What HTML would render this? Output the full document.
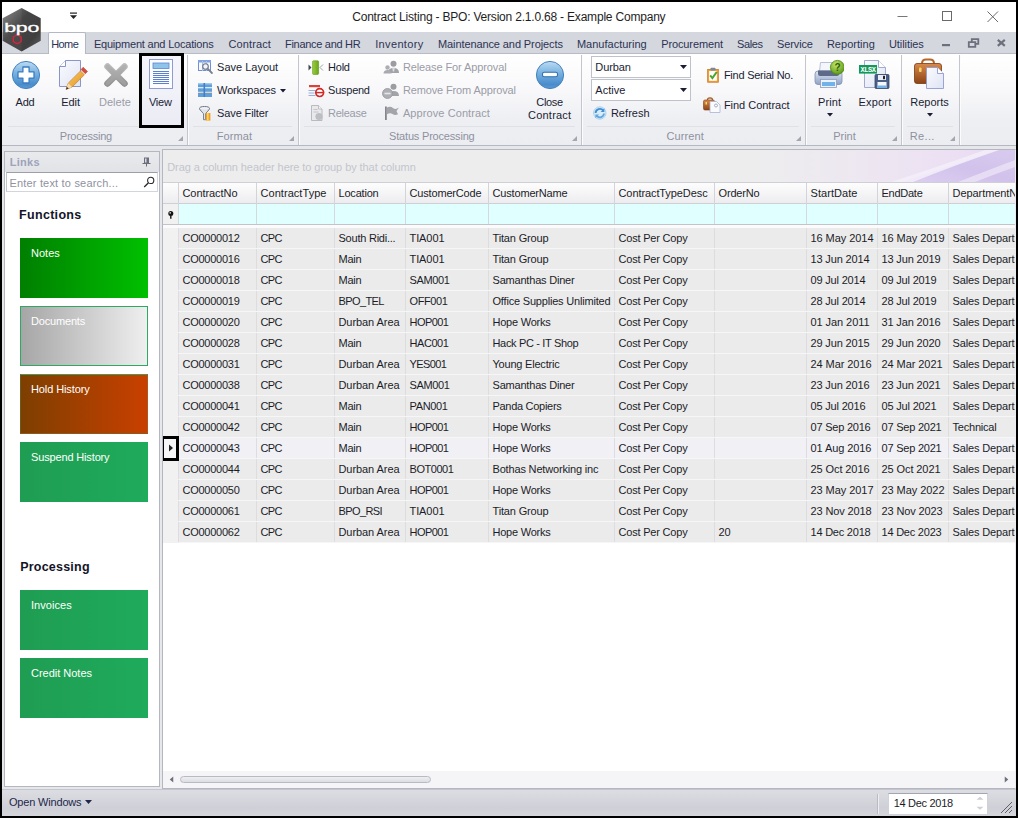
<!DOCTYPE html>
<html lang="en"><head><meta charset="utf-8"><title>Contract Listing - BPO</title>
<style>
*{box-sizing:border-box;margin:0;padding:0}
html,body{width:1018px;height:818px;overflow:hidden;background:#000}
body{font-family:"Liberation Sans",sans-serif;font-size:11px;color:#1a1a2e;letter-spacing:-0.15px;position:relative}
.abs{position:absolute}
.t{position:absolute;white-space:nowrap;color:#1a1d33}
#win{position:absolute;left:2px;top:2px;width:1014px;height:814px;background:#e6e7eb;overflow:hidden}
#title{position:absolute;left:0;top:0;width:1014px;height:30px;background:#fff}
#tabs{position:absolute;left:0;top:30px;width:1014px;height:22px;background:#d5d7de;border-bottom:1px solid #b9bcc6}
.tab{color:#2b3353}
#hometab{position:absolute;left:46px;top:30px;width:38px;height:23px;background:#fdfdfe;border:1px solid #b4b8c4;border-bottom:none;border-radius:2px 2px 0 0}
#ribbon{position:absolute;left:0;top:52px;width:1014px;height:92px;background:linear-gradient(#ffffff 0%,#f8f8fa 40%,#eeeff3 72%,#ecedf1 100%);border-bottom:1px solid #b5b8c0}
.gsep{position:absolute;top:3px;width:2px;height:90px;border-left:1px solid #c3c6cf;border-right:1px solid #fcfcfd}
.gcap{color:#8d919f}
.gline{position:absolute;top:70px;height:1px;background:#dfe1e6}
.dis{color:#9a9ca6}
.launch{position:absolute;top:81px;width:0;height:0;border-left:5px solid transparent;border-bottom:5px solid #a3a6b0}

#lp{position:absolute;left:2px;top:149px;width:156px;height:636px;background:#fff;border:1px solid #b4b7c0}
#lph{position:absolute;left:0;top:0;width:154px;height:20px;background:linear-gradient(#e9eaec,#e2e3e7)}
#lph span{position:absolute;left:5px;top:3px;font-weight:bold;color:#a9adbd;font-size:11px;letter-spacing:0}
#srch{position:absolute;left:1px;top:20px;width:152px;height:20px;border:1px solid #d3d5dc;border-top-color:#9c9faa;border-left-color:#c3c5cd;background:#fff}
#srch span{position:absolute;left:3px;top:2px;color:#9da0ab;font-size:11px;letter-spacing:0.1px}
.hd{position:absolute;left:15.500px;font-weight:bold;font-size:13px;color:#141428;letter-spacing:-0.2px}
.tile{position:absolute;left:16px;width:128px;height:60px;color:#fff;font-size:11px}
.tile span{position:absolute;left:11px;top:9px;letter-spacing:-0.1px}
#gp{position:absolute;left:160px;top:147px;width:854px;height:640px;background:#fff;border:1px solid #b4b7c0;border-right-color:#ececf0;overflow:hidden}
#grp{position:absolute;left:0;top:0;width:852px;height:33px;background:#ededee;border-bottom:1px solid #cfd0d6}
#grp span{position:absolute;left:5px;top:9px;color:#c3c5cc;font-size:11px;letter-spacing:-0.05px}
#hdr{position:absolute;left:0;top:33px;width:852px;height:21px;background:linear-gradient(#fdfdfd,#ededf0);border-bottom:1px solid #cfd0d6}
#flt{position:absolute;left:0;top:54px;width:852px;height:21px;background:#e0ffff;border-bottom:1px solid #c3c4ca}
.hc{position:absolute;top:0;height:21px;border-left:1px solid #d3d4da;padding:4px 0 0 3.5px;white-space:nowrap;overflow:hidden;color:#1c1c28}
.fc{position:absolute;top:0;height:20px;border-left:1px solid #d3d9de}
.row{position:absolute;left:0;width:852px;height:21px;background:#ebebeb;border-bottom:1px solid #f6f6f7}
.row.foc{background:#f0f0f5}
.c{position:absolute;top:0;height:20px;border-left:1px solid #dddde0;padding:4px 0 0 3.5px;white-space:nowrap;overflow:hidden;color:#1c1c28}
.ind{position:absolute;left:0;top:0;width:16px;height:21px;background:#f1f1f2}
#status{position:absolute;left:0;top:787px;width:1014px;height:27px;background:linear-gradient(#dddee3,#cfd0d7 70%,#d5d6db);box-shadow:inset 0 1px 0 #c6c7ce}
</style></head>
<body>
<div id="win">
<div id="title"><div class="t " style="left:350.2px;top:8.4px;font-size:12px;line-height:14px;letter-spacing:-0.20px;color:#1e1e1e;">Contract Listing - BPO: Version 2.1.0.68 - Example Company</div>
<svg class="abs" style="left:67px;top:10px" width="9" height="8" viewBox="0 0 9 8"><rect x="1" y="0.5" width="7" height="1.2" fill="#222"/><path d="M1 3.2h7L4.5 7z" fill="#222"/></svg>
<svg class="abs" style="left:880px;top:0" width="134" height="30" viewBox="0 0 134 30"><path d="M15.500 14.500h10" stroke="#777" stroke-width="1"/><rect x="60.500" y="9.500" width="9" height="9" fill="none" stroke="#6a6a6a" stroke-width="1"/><path d="M105.5 9.5l10.5 10.5M116 9.5l-10.5 10.5" stroke="#6a6a6a" stroke-width="1" fill="none"/></svg>
</div>
<div id="tabs"></div><div id="hometab"></div>
<div class="t tab" style="left:49.2px;top:36.2px;font-size:11px;line-height:13px;letter-spacing:-0.59px;">Home</div><div class="t tab" style="left:91.9px;top:36.2px;font-size:11px;line-height:13px;letter-spacing:-0.20px;">Equipment and Locations</div><div class="t tab" style="left:226.5px;top:36.2px;font-size:11px;line-height:13px;letter-spacing:0.12px;">Contract</div><div class="t tab" style="left:283.0px;top:36.2px;font-size:11px;line-height:13px;letter-spacing:-0.29px;">Finance and HR</div><div class="t tab" style="left:373.2px;top:36.2px;font-size:11px;line-height:13px;letter-spacing:0.35px;">Inventory</div><div class="t tab" style="left:436.0px;top:36.2px;font-size:11px;line-height:13px;letter-spacing:-0.10px;">Maintenance and Projects</div><div class="t tab" style="left:574.9px;top:36.2px;font-size:11px;line-height:13px;letter-spacing:0.01px;">Manufacturing</div><div class="t tab" style="left:659.2px;top:36.2px;font-size:11px;line-height:13px;letter-spacing:-0.11px;">Procurement</div><div class="t tab" style="left:735.0px;top:36.2px;font-size:11px;line-height:13px;letter-spacing:-0.37px;">Sales</div><div class="t tab" style="left:775.1px;top:36.2px;font-size:11px;line-height:13px;letter-spacing:-0.14px;">Service</div><div class="t tab" style="left:824.9px;top:36.2px;font-size:11px;line-height:13px;letter-spacing:0.03px;">Reporting</div><div class="t tab" style="left:887.0px;top:36.2px;font-size:11px;line-height:13px;letter-spacing:-0.08px;">Utilities</div>
<svg class="abs" style="left:920px;top:32px" width="94" height="20" viewBox="0 0 94 20"><rect x="20" y="10" width="8" height="2.200" fill="#6d707c"/><path d="M49.800 5.200h6.500v4.600h-6.500z" fill="none" stroke="#6d707c" stroke-width="1.800"/><path d="M46.800 8.200h6.500v4.600h-6.500z" fill="#d5d7de" stroke="#6d707c" stroke-width="1.800"/><path d="M75.800 5.800l7 6M82.800 5.800l-7 6" stroke="#6d707c" stroke-width="2.200" fill="none"/></svg>
<div id="ribbon"></div>
<svg width="0" height="0" style="position:absolute"><defs>
<linearGradient id="gBlue" x1="0" y1="0" x2="0" y2="1"><stop offset="0" stop-color="#bcdcf3"/><stop offset="0.5" stop-color="#6eabdd"/><stop offset="0.85" stop-color="#4a8ccb"/><stop offset="1" stop-color="#5b9ad4"/></linearGradient>
<linearGradient id="gBlueL" x1="0" y1="0" x2="0" y2="1"><stop offset="0" stop-color="#9ccbee"/><stop offset="1" stop-color="#3f83c4"/></linearGradient>
<linearGradient id="gGrayX" x1="0" y1="0" x2="0" y2="1"><stop offset="0" stop-color="#bdbdbd"/><stop offset="1" stop-color="#8f8f8f"/></linearGradient>
<linearGradient id="gPage" x1="0" y1="0" x2="1" y2="1"><stop offset="0" stop-color="#fafbff"/><stop offset="1" stop-color="#dfe4f3"/></linearGradient>
<linearGradient id="gGreen" x1="0" y1="0" x2="1" y2="0"><stop offset="0" stop-color="#9ccf3c"/><stop offset="1" stop-color="#6aa51c"/></linearGradient>
<radialGradient id="gGreenB" cx="40%" cy="30%" r="70%"><stop offset="0" stop-color="#c3e86a"/><stop offset="1" stop-color="#5e9a18"/></radialGradient>
<linearGradient id="gBrown" x1="0" y1="0" x2="0" y2="1"><stop offset="0" stop-color="#d98a4a"/><stop offset="1" stop-color="#8c4315"/></linearGradient>
<linearGradient id="gPrn" x1="0" y1="0" x2="0" y2="1"><stop offset="0" stop-color="#dfe6f2"/><stop offset="1" stop-color="#8fa3c6"/></linearGradient>
<linearGradient id="gPencil" x1="0" y1="0" x2="1" y2="1"><stop offset="0" stop-color="#fbd36a"/><stop offset="1" stop-color="#e08a1a"/></linearGradient>
</defs></svg>
<div class="gsep" style="left:185px;top:53px"></div><div class="gsep" style="left:296px;top:53px"></div><div class="gsep" style="left:579px;top:53px"></div><div class="gsep" style="left:803px;top:53px"></div><div class="gsep" style="left:899px;top:53px"></div><div class="gsep" style="left:957px;top:53px"></div>
<div class="gline" style="left:6px;width:173px;top:124px"></div><div class="t gcap" style="left:57.8px;top:127.7px;font-size:11px;line-height:13px;letter-spacing:-0.23px;">Processing</div><div class="launch" style="left:176px;top:134px"></div><div class="gline" style="left:191px;width:99px;top:124px"></div><div class="t gcap" style="left:214.8px;top:127.7px;font-size:11px;line-height:13px;letter-spacing:0.09px;">Format</div><div class="launch" style="left:287px;top:134px"></div><div class="gline" style="left:302px;width:271px;top:124px"></div><div class="t gcap" style="left:387.1px;top:127.7px;font-size:11px;line-height:13px;letter-spacing:-0.19px;">Status Processing</div><div class="launch" style="left:570px;top:134px"></div><div class="gline" style="left:585px;width:212px;top:124px"></div><div class="t gcap" style="left:664.5px;top:127.7px;font-size:11px;line-height:13px;letter-spacing:0.10px;">Current</div><div class="launch" style="left:794px;top:134px"></div><div class="gline" style="left:809px;width:84px;top:124px"></div><div class="t gcap" style="left:831.2px;top:127.7px;font-size:11px;line-height:13px;letter-spacing:-0.01px;">Print</div><div class="launch" style="left:890px;top:134px"></div><div class="gline" style="left:905px;width:46px;top:124px"></div><div class="t gcap" style="left:907.8px;top:127.7px;font-size:11px;line-height:13px;letter-spacing:0.35px;">Re...</div><div class="launch" style="left:948px;top:134px"></div>
<div class="abs" style="left:137px;top:51px;width:45px;height:75px;border:3px solid #000;background:rgba(232,232,246,0.45)"></div>
<svg class="abs" style="left:9px;top:58px" width="30" height="30" viewBox="0 0 30 30"><circle cx="15" cy="15" r="13.6" fill="url(#gBlue)" stroke="#4682bf" stroke-width="1"/><path d="M11.900 7h6.200v4.900h4.900v6.200h-4.900v4.900h-6.200v-4.900H7v-6.200h4.900z" fill="#fdfeff" stroke="#3a7cc0" stroke-width="1.300" stroke-linejoin="round"/></svg>
<svg class="abs" style="left:55px;top:56px" width="32" height="34" viewBox="0 0 32 34"><path d="M8.5 2.5h15v26h-21v-20z" fill="url(#gPage)" stroke="#8a95c9" stroke-width="1"/><path d="M2.5 8.5h6v-6" fill="#fff" stroke="#8a95c9" stroke-width="1"/><path d="M9 31.500l2.200-6.300L23.500 12.900l3.900 3.900L15.100 29.100z" fill="url(#gPencil)" stroke="#b8741c" stroke-width="0.600"/><path d="M24 11.500l2.200-2.300 4.300 4.300-2.200 2.300z" fill="#d84a3a" stroke="#b03426" stroke-width="0.5"/><path d="M9 31.500l0.900-2.800 1.900 1.900z" fill="#333"/><path d="M11.200 25.200l-1.300 3.500 1.900 1.900 3.300-1.500z" fill="#f3dcb4"/></svg>
<svg class="abs" style="left:99px;top:58px" width="30" height="30" viewBox="0 0 30 30"><path d="M6.500 6.500l17 17M23.500 6.500l-17 17" stroke="url(#gGrayX)" stroke-width="6.500" stroke-linecap="round" fill="none"/><path d="M6.500 6.500l17 17M23.500 6.500l-17 17" stroke="#a9a9a9" stroke-width="4" stroke-linecap="round" fill="none" opacity="0.600"/></svg>
<svg class="abs" style="left:146px;top:56px" width="26" height="32" viewBox="0 0 26 32"><rect x="1.500" y="1.500" width="23" height="29" fill="#fbfcff" stroke="#8f9bd2" stroke-width="1"/><rect x="5" y="5" width="16" height="5.500" fill="#8ec3ea" stroke="#5f86cf" stroke-width="0.800"/><rect x="5" y="13" width="16" height="1" fill="#5c7fd0"/><rect x="5" y="15" width="16" height="1" fill="#5c7fd0"/><rect x="5" y="17" width="16" height="1" fill="#5c7fd0"/><rect x="5" y="19" width="16" height="1" fill="#5c7fd0"/><rect x="5" y="21" width="16" height="1" fill="#5c7fd0"/><rect x="5" y="23" width="16" height="1" fill="#5c7fd0"/><rect x="5" y="25" width="16" height="1" fill="#5c7fd0"/></svg>
<svg class="abs" style="left:533px;top:58px" width="30" height="30" viewBox="0 0 30 30"><circle cx="15" cy="15" r="13.600" fill="url(#gBlue)" stroke="#4682bf" stroke-width="1"/><rect x="7.500" y="12.200" width="15" height="4.600" rx="1.800" fill="#fff" stroke="#2f6fb0" stroke-width="1.100"/></svg>
<svg class="abs" style="left:812px;top:56px" width="30" height="32" viewBox="0 0 30 32"><path d="M6.500 4.500h14l1 9h-16z" fill="#f4f6fb" stroke="#a9b3cc" stroke-width="0.800"/><rect x="1" y="13" width="27" height="13.500" rx="3" fill="url(#gPrn)" stroke="#7d8fb3" stroke-width="0.800"/><path d="M4 12.500h21v3.500q0 2-2 2h-17q-2 0-2-2z" fill="#5d6b88"/><rect x="6.500" y="21.500" width="16" height="8" fill="#eef2fa" stroke="#8d9cbd" stroke-width="0.800"/><rect x="8" y="24" width="13" height="4" fill="#6fb3e8"/><circle cx="23.400" cy="9.400" r="7" fill="url(#gGreenB)" stroke="#4f8414" stroke-width="0.800"/><text x="23.400" y="13" font-size="10" font-weight="bold" font-family="Liberation Sans,sans-serif" text-anchor="middle" fill="#2f5a0b">?</text></svg>
<svg class="abs" style="left:856px;top:56px" width="32" height="32" viewBox="0 0 32 32"><path d="M6.500 2.500h14l7 7v20h-21z" fill="url(#gPage)" stroke="#98a3c8" stroke-width="0.900"/><path d="M20.500 2.500v7h7" fill="#fff" stroke="#98a3c8" stroke-width="0.900"/><rect x="1" y="7" width="18" height="8.600" fill="#12995a"/><text x="10" y="14.300" font-size="7" font-weight="bold" font-family="Liberation Mono,monospace" text-anchor="middle" fill="#fff" letter-spacing="-0.400">XLSX</text><rect x="17" y="16.500" width="14" height="14" rx="1" fill="#4a5f88" stroke="#34466b" stroke-width="0.800"/><rect x="20" y="17" width="8" height="5" fill="#e8edf6"/><rect x="25" y="17.800" width="2" height="3.400" fill="#222"/><rect x="19.500" y="24" width="9" height="6" fill="#f5f7fb"/><rect x="19.500" y="27.500" width="9" height="2.500" fill="#6fb3e8"/></svg>
<svg class="abs" style="left:911px;top:55px" width="32" height="33" viewBox="0 0 32 33"><path d="M9 6.500q0-4 4-4h4q4 0 4 4" fill="none" stroke="#b4662a" stroke-width="2"/><rect x="1.500" y="6.500" width="27" height="20" rx="2.500" fill="url(#gBrown)" stroke="#7a3a10" stroke-width="0.800"/><rect x="6" y="10.500" width="2.600" height="4.500" rx="1" fill="#f6d56a"/><path d="M13.500 10.500h11l6 6v15h-17z" fill="url(#gPage)" stroke="#8f9bd2" stroke-width="0.900"/><path d="M24.500 10.500v6h6" fill="#fff" stroke="#8f9bd2" stroke-width="0.900"/></svg>
<svg class="abs" style="left:196px;top:58px" width="15" height="15" viewBox="0 0 15 15"><rect x="0.500" y="0.500" width="12" height="10" fill="#f7f9fe" stroke="#6f8fd6" stroke-width="1"/><rect x="0" y="0" width="13" height="2.500" fill="#7fa3e0"/><path d="M4.500 1v10M8.500 1v10" stroke="#a9bfea" stroke-width="1"/><circle cx="7.500" cy="6.500" r="2.800" fill="#f2f5fb" stroke="#6d7482" stroke-width="1.100"/><path d="M9.600 8.700l4.300 4.300" stroke="#7a8190" stroke-width="1.800" stroke-linecap="round"/></svg>
<svg class="abs" style="left:196px;top:81px" width="14" height="14" viewBox="0 0 14 14"><rect x="0" y="0" width="14" height="14" fill="#5f9fdb"/><rect x="0" y="0" width="14" height="1.500" fill="#9fcaee"/><path d="M0 4.700h14" stroke="#e8f3fc" stroke-width="1.200"/><path d="M0 9.300h14" stroke="#f6d9b0" stroke-width="1.200"/><path d="M6.300 0v14" stroke="#3f80c6" stroke-width="1.600"/></svg>
<svg class="abs" style="left:197px;top:104px" width="13" height="15" viewBox="0 0 13 15"><ellipse cx="5.500" cy="2.600" rx="5" ry="2.100" fill="#eef0f4" stroke="#6f7684" stroke-width="1"/><path d="M0.800 3.500l3.700 4.200v6h2v-6l3.700-4.200" fill="#dfe3ea" stroke="#6f7684" stroke-width="0.900"/><rect x="6.600" y="7" width="4.800" height="7.600" fill="#f0a020"/><rect x="8" y="7" width="1.600" height="7.600" fill="#fbd27a"/></svg>
<svg class="abs" style="left:306px;top:58px" width="16" height="16" viewBox="0 0 16 16"><path d="M0.500 4.500l3 3-3 3z" fill="#3f4652"/><rect x="4.600" y="0.800" width="6" height="13.600" rx="0.800" fill="url(#gGreen)" stroke="#5c9318" stroke-width="0.600"/><path d="M15 4.500l-3 3 3 3" fill="none" stroke="#9aa0aa" stroke-width="1"/></svg>
<svg class="abs" style="left:306px;top:81px" width="19" height="16" viewBox="0 0 19 16"><rect x="1" y="2" width="11" height="2.200" fill="#d8433a"/><path d="M0.500 7.500h7M0.500 10h6M0.500 12.500h7" stroke="#9ab0dc" stroke-width="1"/><circle cx="11.700" cy="9.600" r="3.900" fill="#fff" stroke="#d22a24" stroke-width="1.700"/><path d="M7.700 9.600h8" stroke="#d22a24" stroke-width="1.500"/></svg>
<svg class="abs" style="left:308px;top:103px" width="16" height="17" viewBox="0 0 16 17"><path d="M1.500 0.500h7l3.500 3.500v11.500h-10.500z" fill="#e9e9ec" stroke="#b3b4ba" stroke-width="0.900"/><path d="M8.500 0.500v3.500h3.500" fill="#f6f6f8" stroke="#b3b4ba" stroke-width="0.800"/><circle cx="9" cy="11.500" r="3.600" fill="#bdbec4"/><path d="M3.500 4.500h4M3.500 7h5" stroke="#c4c5cb" stroke-width="1"/></svg>
<svg class="abs" style="left:381px;top:58px" width="17" height="15" viewBox="0 0 17 15"><circle cx="10.500" cy="3.800" r="3" fill="#9c9da3"/><path d="M5 13q0-5 5.500-5t5.500 5z" fill="#a2a3a9"/><circle cx="4.500" cy="7.500" r="2.200" fill="#adaeb4"/><path d="M0.500 13.500q0-3.500 4-3.500t4 3.500z" fill="#a9aab0"/><path d="M9.200 7.500h2.600l-0.600 4h-1.400z" fill="#dcdce0"/></svg>
<svg class="abs" style="left:380px;top:81px" width="18" height="17" viewBox="0 0 18 17"><circle cx="11.500" cy="3.800" r="3" fill="#9c9da3"/><path d="M6 13q0-5 5.500-5t5.500 5z" fill="#a2a3a9"/><circle cx="5.500" cy="10.500" r="5" fill="#aeafb5" stroke="#96979d" stroke-width="0.800"/><path d="M2.500 10.500h6" stroke="#e6e6ea" stroke-width="1.600"/></svg>
<svg class="abs" style="left:382px;top:104px" width="16" height="15" viewBox="0 0 16 15"><rect x="1" y="0.500" width="1.800" height="13.500" fill="#85868c"/><path d="M3 1.500q3.500-1.500 6 0.500t6-0.500l-2.500 3.500 1.500 3.200q-3 1.500-5.500-0.200t-5.500 0.200z" fill="#a3a4aa"/></svg>
<svg class="abs" style="left:590px;top:104px" width="16" height="14" viewBox="0 0 16 14"><circle cx="7.800" cy="7" r="6.200" fill="#d8ebf9" stroke="#9cc9ea" stroke-width="0.800"/><path d="M3.600 7a4.200 4.200 0 0 1 7.600-2.400" fill="none" stroke="#3f8fd2" stroke-width="1.800"/><path d="M12.400 2.200v3.800h-3.800z" fill="#3f8fd2"/><path d="M12 7.500a4.200 4.200 0 0 1-7.300 2.400" fill="none" stroke="#5fa6de" stroke-width="1.800"/><path d="M3.400 12.200v-3.600h3.600z" fill="#5fa6de"/></svg>
<svg class="abs" style="left:705px;top:65px" width="12" height="16" viewBox="0 0 12 16"><rect x="0.700" y="2.500" width="10.600" height="12.700" fill="#f6a13a" stroke="#c97518" stroke-width="0.800"/><rect x="2.100" y="4" width="7.800" height="9.800" fill="#fdfdfd"/><rect x="3.500" y="0.800" width="5" height="2.800" rx="0.800" fill="#7f8796"/><path d="M3.200 8.300l2.200 2.800 4.400-6.200" fill="none" stroke="#4aa52e" stroke-width="1.900"/></svg>
<svg class="abs" style="left:701px;top:95px" width="18" height="16" viewBox="0 0 18 16"><path d="M4.500 3q0-2 2-2h1q2 0 2 2" fill="none" stroke="#b4662a" stroke-width="1.300"/><rect x="0.500" y="3" width="11" height="10" rx="1.500" fill="url(#gBrown)" stroke="#7a3a10" stroke-width="0.600"/><rect x="2.500" y="5" width="1.500" height="2.500" fill="#f6d56a"/><path d="M7 4.500h6.500l3.500 3.500v7.500h-10z" fill="#fafbff" stroke="#aab3d6" stroke-width="0.800"/><circle cx="13" cy="8.500" r="1.500" fill="none" stroke="#8a93a8" stroke-width="0.700"/></svg>
<div class="t " style="left:13.5px;top:93.9px;font-size:11px;line-height:13px;letter-spacing:-0.19px;">Add</div><div class="t " style="left:59.2px;top:93.9px;font-size:11px;line-height:13px;letter-spacing:-0.02px;">Edit</div><div class="t dis" style="left:97.1px;top:93.9px;font-size:11px;line-height:13px;letter-spacing:-0.02px;">Delete</div><div class="t " style="left:146.9px;top:93.9px;font-size:11px;line-height:13px;letter-spacing:-0.19px;">View</div><div class="t " style="left:534.3px;top:93.7px;font-size:11px;line-height:13px;letter-spacing:-0.34px;">Close</div><div class="t " style="left:526.1px;top:107.2px;font-size:11px;line-height:13px;letter-spacing:0.20px;">Contract</div><div class="t " style="left:816.0px;top:93.9px;font-size:11px;line-height:13px;letter-spacing:0.10px;">Print</div><div class="t " style="left:856.5px;top:93.9px;font-size:11px;line-height:13px;letter-spacing:0.18px;">Export</div><div class="t " style="left:908.3px;top:93.9px;font-size:11px;line-height:13px;letter-spacing:-0.02px;">Reports</div><svg class="abs" style="left:824.5px;top:110.5px" width="6" height="4" viewBox="0 0 6 4"><path d="M0 0h6L3.0 3.5z" fill="#1a1d33"/></svg>
<svg class="abs" style="left:924.5px;top:110.5px" width="6" height="4" viewBox="0 0 6 4"><path d="M0 0h6L3.0 3.5z" fill="#1a1d33"/></svg>
<div class="t " style="left:215.1px;top:59.4px;font-size:11px;line-height:13px;letter-spacing:-0.01px;">Save Layout</div><div class="t " style="left:215.1px;top:82.3px;font-size:11px;line-height:13px;letter-spacing:-0.15px;">Workspaces</div><div class="t " style="left:215.1px;top:104.8px;font-size:11px;line-height:13px;letter-spacing:-0.13px;">Save Filter</div><svg class="abs" style="left:278.3px;top:86.5px" width="6" height="4" viewBox="0 0 6 4"><path d="M0 0h6L3.0 3.5z" fill="#1a1d33"/></svg>
<div class="t " style="left:326.1px;top:59.4px;font-size:11px;line-height:13px;letter-spacing:-0.26px;">Hold</div><div class="t " style="left:326.1px;top:82.3px;font-size:11px;line-height:13px;letter-spacing:-0.26px;">Suspend</div><div class="t dis" style="left:326.1px;top:104.8px;font-size:11px;line-height:13px;letter-spacing:-0.28px;">Release</div><div class="t dis" style="left:400.9px;top:59.4px;font-size:11px;line-height:13px;letter-spacing:-0.11px;">Release For Approval</div><div class="t dis" style="left:400.9px;top:82.3px;font-size:11px;line-height:13px;letter-spacing:-0.13px;">Remove From Approval</div><div class="t dis" style="left:400.9px;top:104.8px;font-size:11px;line-height:13px;letter-spacing:0.09px;">Approve Contract</div><div class="abs" style="left:589px;top:54px;width:100px;height:22px;background:#fff;border:1px solid #bfc2cb"></div><div class="t " style="left:593.3px;top:59.2px;font-size:11px;line-height:13px;letter-spacing:-0.08px;">Durban</div><svg class="abs" style="left:678px;top:63px" width="7" height="4.5" viewBox="0 0 7 4.5"><path d="M0 0h7L3.5 4.0z" fill="#1a1d33"/></svg>
<div class="abs" style="left:589px;top:77px;width:100px;height:22px;background:#fff;border:1px solid #bfc2cb"></div><div class="t " style="left:593.3px;top:82.3px;font-size:11px;line-height:13px;letter-spacing:0.04px;">Active</div><svg class="abs" style="left:678px;top:86px" width="7" height="4.5" viewBox="0 0 7 4.5"><path d="M0 0h7L3.5 4.0z" fill="#1a1d33"/></svg>
<div class="t " style="left:608.9px;top:105.0px;font-size:11px;line-height:13px;letter-spacing:0.04px;">Refresh</div><div class="t " style="left:721.9px;top:67.2px;font-size:11px;line-height:13px;letter-spacing:-0.24px;">Find Serial No.</div><div class="t " style="left:721.9px;top:96.8px;font-size:11px;line-height:13px;letter-spacing:-0.02px;">Find Contract</div><svg class="abs" style="left:0;top:4px" width="44" height="48" viewBox="2 6 44 48"><defs><linearGradient id="gHex" x1="0" y1="0" x2="1" y2="1"><stop offset="0" stop-color="#8c8c8c"/><stop offset="0.4" stop-color="#4c4c4c"/><stop offset="0.75" stop-color="#474747"/><stop offset="1" stop-color="#707070"/></linearGradient></defs><path d="M21.600 7.900L40.700 18.300V40.700L21.600 51.400L2.600 40.700V18.300z" fill="url(#gHex)"/><path d="M21.600 7.900L40.700 18.300V40.700L21.600 51.400z" fill="#000" opacity="0.100"/><path d="M17.200 34.800l3.900 2.250v4.500l-3.900 2.250-3.900-2.250v-4.500z" fill="none" stroke="#e0203a" stroke-width="1.300"/><text x="21.700" y="32.300" font-family="Liberation Sans,sans-serif" font-size="13.5" fill="#fff" stroke="#fff" stroke-width="0.3" text-anchor="middle" textLength="35" lengthAdjust="spacingAndGlyphs">bpo</text></svg>
<div id="lp"><div id="lph"><div class="t " style="left:4.8px;top:4.3px;font-size:11px;line-height:13px;letter-spacing:0.25px;font-weight:bold;color:#9da3ba;">Links</div><svg class="abs" style="left:137px;top:5px" width="9" height="10" viewBox="0 0 9 10"><rect x="2.500" y="1" width="4" height="5" fill="#d9dbe0" stroke="#6b6f7c" stroke-width="1"/><rect x="4.500" y="1" width="2.200" height="5" fill="#6b6f7c"/><path d="M0.500 6.500h8M4.500 7v2.500" stroke="#6b6f7c" stroke-width="1"/></svg></div>
<div id="srch"><div class="t " style="left:2.4px;top:3.5px;font-size:11px;line-height:13px;letter-spacing:0.19px;color:#8f92a0;">Enter text to search...</div><svg class="abs" style="left:135px;top:3px" width="14" height="13" viewBox="0 0 14 13"><circle cx="8.700" cy="4.400" r="3.100" fill="none" stroke="#2a2a2e" stroke-width="1.100"/><path d="M6.500 6.700l-4.300 4.300" stroke="#2a2a2e" stroke-width="1.300"/></svg></div>
<div class="t " style="left:14.1px;top:55.9px;font-size:12.5px;line-height:15px;letter-spacing:0.30px;font-weight:bold;color:#141428;">Functions</div><div class="t " style="left:15.2px;top:407.8px;font-size:12.5px;line-height:15px;letter-spacing:0.22px;font-weight:bold;color:#141428;">Processing</div>
<div class="tile" style="top:86px;left:15px;background:linear-gradient(90deg,#007f00,#00c000);"></div><div class="t " style="left:26.0px;top:95.3px;font-size:11px;line-height:13px;letter-spacing:0.01px;color:#fff;">Notes</div>
<div class="tile" style="top:154px;left:15px;background:linear-gradient(90deg,#a6a6a6,#efefef);border:1px solid #2fa866;"></div><div class="t " style="left:26.0px;top:163.3px;font-size:11px;line-height:13px;letter-spacing:-0.18px;color:#fff;">Documents</div>
<div class="tile" style="top:222px;left:15px;background:linear-gradient(90deg,#7d3f00,#c94000);border:1px solid #4a9a55;border-left-color:#6b5a1e;border-right-color:#a85a20;border-bottom-color:#8a5a20;"></div><div class="t " style="left:26.0px;top:231.3px;font-size:11px;line-height:13px;letter-spacing:-0.10px;color:#fff;">Hold History</div>
<div class="tile" style="top:290px;left:15px;background:linear-gradient(90deg,#1f9d52,#1fab5c);"></div><div class="t " style="left:26.0px;top:299.3px;font-size:11px;line-height:13px;letter-spacing:-0.15px;color:#fff;">Suspend History</div>
<div class="tile" style="top:438px;left:15px;background:linear-gradient(90deg,#1f9d52,#1fab5c);"></div><div class="t " style="left:26.0px;top:447.3px;font-size:11px;line-height:13px;letter-spacing:0.06px;color:#fff;">Invoices</div>
<div class="tile" style="top:506px;left:15px;background:linear-gradient(90deg,#1f9d52,#1fab5c);"></div><div class="t " style="left:26.0px;top:515.3px;font-size:11px;line-height:13px;letter-spacing:-0.01px;color:#fff;">Credit Notes</div>
</div>
<div id="gp">
<div id="grp"><div class="t " style="left:4.2px;top:11.0px;font-size:11px;line-height:13px;letter-spacing:-0.07px;color:#c3c5cc;">Drag a column header here to group by that column</div><svg class="abs" style="left:572px;top:0" width="280" height="32" viewBox="572 0 280 32"><defs><linearGradient id="gSw" x1="0" y1="0" x2="1" y2="0"><stop offset="0" stop-color="#eee4f3" stop-opacity="0"/><stop offset="0.45" stop-color="#ede2f3" stop-opacity="0.6"/><stop offset="0.75" stop-color="#ecdff4" stop-opacity="0.95"/><stop offset="1" stop-color="#e6d8f2"/></linearGradient><linearGradient id="gSw2" x1="0" y1="1" x2="1" y2="0"><stop offset="0" stop-color="#d9ccf0"/><stop offset="0.5" stop-color="#cdbdea"/><stop offset="1" stop-color="#d6c8ee"/></linearGradient></defs><rect x="590" y="0" width="262" height="32" fill="url(#gSw)"/><path d="M738 32Q795 14 835 0H852V32z" fill="url(#gSw2)" opacity="0.850"/><path d="M728 32Q780 15 822 0H836Q790 16 750 32z" fill="#f3eef9" opacity="0.850"/><path d="M795 32Q828 19 852 10V17Q832 24 812 32z" fill="#ebe3f6" opacity="0.800"/></svg></div>
<div id="hdr"><div class="hc" style="left:15px;width:78px"><span style="letter-spacing:-0.07px">ContractNo</span></div><div class="hc" style="left:93px;width:78px"><span style="letter-spacing:0.05px">ContractType</span></div><div class="hc" style="left:171px;width:71px"><span style="letter-spacing:-0.20px">Location</span></div><div class="hc" style="left:242px;width:83px"><span style="letter-spacing:-0.17px">CustomerCode</span></div><div class="hc" style="left:325px;width:126px"><span style="letter-spacing:-0.17px">CustomerName</span></div><div class="hc" style="left:451px;width:100px"><span style="letter-spacing:-0.09px">ContractTypeDesc</span></div><div class="hc" style="left:551px;width:92px"><span style="letter-spacing:-0.17px">OrderNo</span></div><div class="hc" style="left:643px;width:71px"><span style="letter-spacing:0.06px">StartDate</span></div><div class="hc" style="left:714px;width:71px"><span style="letter-spacing:-0.26px">EndDate</span></div><div class="hc" style="left:785px;width:67px"><span style="letter-spacing:-0.06px">DepartmentName</span></div></div>
<div id="flt"><div class="abs" style="left:0;top:0;width:15px;height:20px;background:#f1f1f2"></div><svg class="abs" style="left:5px;top:7px" width="6" height="8" viewBox="0 0 6 8"><circle cx="2.800" cy="2.500" r="2.500" fill="#111"/><circle cx="2.200" cy="1.900" r="0.800" fill="#ddd"/><path d="M2.800 4.500v3.300" stroke="#111" stroke-width="1.400"/></svg><div class="fc" style="left:15px;width:78px"></div><div class="fc" style="left:93px;width:78px"></div><div class="fc" style="left:171px;width:71px"></div><div class="fc" style="left:242px;width:83px"></div><div class="fc" style="left:325px;width:126px"></div><div class="fc" style="left:451px;width:100px"></div><div class="fc" style="left:551px;width:92px"></div><div class="fc" style="left:643px;width:71px"></div><div class="fc" style="left:714px;width:71px"></div><div class="fc" style="left:785px;width:67px"></div></div>
<div class="abs" style="left:0;top:75px;width:852px;height:3px;background:#fbfbfc"></div>
<div class="row" style="top:78px"><div class="ind"></div><div class="c" style="left:15px;width:78px"><span style="letter-spacing:-0.26px">CO0000012</span></div><div class="c" style="left:93px;width:78px"><span style="letter-spacing:-0.60px">CPC</span></div><div class="c" style="left:171px;width:71px"><span style="letter-spacing:-0.23px">South Ridi...</span></div><div class="c" style="left:242px;width:83px"><span style="letter-spacing:-0.08px">TIA001</span></div><div class="c" style="left:325px;width:126px"><span style="letter-spacing:-0.16px">Titan Group</span></div><div class="c" style="left:451px;width:100px"><span style="letter-spacing:-0.20px">Cost Per Copy</span></div><div class="c" style="left:551px;width:92px"></div><div class="c" style="left:643px;width:71px"><span style="letter-spacing:-0.06px">16 May 2014</span></div><div class="c" style="left:714px;width:71px"><span style="letter-spacing:-0.06px">16 May 2019</span></div><div class="c" style="left:785px;width:67px"><span style="letter-spacing:-0.13px">Sales Department</span></div></div>
<div class="row" style="top:99px"><div class="ind"></div><div class="c" style="left:15px;width:78px"><span style="letter-spacing:-0.26px">CO0000016</span></div><div class="c" style="left:93px;width:78px"><span style="letter-spacing:-0.60px">CPC</span></div><div class="c" style="left:171px;width:71px"><span style="letter-spacing:-0.21px">Main</span></div><div class="c" style="left:242px;width:83px"><span style="letter-spacing:-0.08px">TIA001</span></div><div class="c" style="left:325px;width:126px"><span style="letter-spacing:-0.16px">Titan Group</span></div><div class="c" style="left:451px;width:100px"><span style="letter-spacing:-0.20px">Cost Per Copy</span></div><div class="c" style="left:551px;width:92px"></div><div class="c" style="left:643px;width:71px"><span style="letter-spacing:-0.15px">13 Jun 2014</span></div><div class="c" style="left:714px;width:71px"><span style="letter-spacing:-0.15px">13 Jun 2019</span></div><div class="c" style="left:785px;width:67px"><span style="letter-spacing:-0.13px">Sales Department</span></div></div>
<div class="row" style="top:120px"><div class="ind"></div><div class="c" style="left:15px;width:78px"><span style="letter-spacing:-0.26px">CO0000018</span></div><div class="c" style="left:93px;width:78px"><span style="letter-spacing:-0.60px">CPC</span></div><div class="c" style="left:171px;width:71px"><span style="letter-spacing:-0.21px">Main</span></div><div class="c" style="left:242px;width:83px"><span style="letter-spacing:-0.37px">SAM001</span></div><div class="c" style="left:325px;width:126px"><span style="letter-spacing:-0.20px">Samanthas Diner</span></div><div class="c" style="left:451px;width:100px"><span style="letter-spacing:-0.20px">Cost Per Copy</span></div><div class="c" style="left:551px;width:92px"></div><div class="c" style="left:643px;width:71px"><span style="letter-spacing:-0.18px">09 Jul 2014</span></div><div class="c" style="left:714px;width:71px"><span style="letter-spacing:-0.18px">09 Jul 2019</span></div><div class="c" style="left:785px;width:67px"><span style="letter-spacing:-0.13px">Sales Department</span></div></div>
<div class="row" style="top:141px"><div class="ind"></div><div class="c" style="left:15px;width:78px"><span style="letter-spacing:-0.26px">CO0000019</span></div><div class="c" style="left:93px;width:78px"><span style="letter-spacing:-0.60px">CPC</span></div><div class="c" style="left:171px;width:71px"><span style="letter-spacing:-0.60px">BPO_TEL</span></div><div class="c" style="left:242px;width:83px"><span style="letter-spacing:-0.40px">OFF001</span></div><div class="c" style="left:325px;width:126px"><span style="letter-spacing:-0.19px">Office Supplies Unlimited</span></div><div class="c" style="left:451px;width:100px"><span style="letter-spacing:-0.20px">Cost Per Copy</span></div><div class="c" style="left:551px;width:92px"></div><div class="c" style="left:643px;width:71px"><span style="letter-spacing:-0.18px">28 Jul 2014</span></div><div class="c" style="left:714px;width:71px"><span style="letter-spacing:-0.18px">28 Jul 2019</span></div><div class="c" style="left:785px;width:67px"><span style="letter-spacing:-0.13px">Sales Department</span></div></div>
<div class="row" style="top:162px"><div class="ind"></div><div class="c" style="left:15px;width:78px"><span style="letter-spacing:-0.26px">CO0000020</span></div><div class="c" style="left:93px;width:78px"><span style="letter-spacing:-0.60px">CPC</span></div><div class="c" style="left:171px;width:71px"><span style="letter-spacing:-0.07px">Durban Area</span></div><div class="c" style="left:242px;width:83px"><span style="letter-spacing:-0.54px">HOP001</span></div><div class="c" style="left:325px;width:126px"><span style="letter-spacing:-0.23px">Hope Works</span></div><div class="c" style="left:451px;width:100px"><span style="letter-spacing:-0.20px">Cost Per Copy</span></div><div class="c" style="left:551px;width:92px"></div><div class="c" style="left:643px;width:71px"><span style="letter-spacing:-0.07px">01 Jan 2011</span></div><div class="c" style="left:714px;width:71px"><span style="letter-spacing:-0.15px">31 Jan 2016</span></div><div class="c" style="left:785px;width:67px"><span style="letter-spacing:-0.13px">Sales Department</span></div></div>
<div class="row" style="top:183px"><div class="ind"></div><div class="c" style="left:15px;width:78px"><span style="letter-spacing:-0.26px">CO0000028</span></div><div class="c" style="left:93px;width:78px"><span style="letter-spacing:-0.60px">CPC</span></div><div class="c" style="left:171px;width:71px"><span style="letter-spacing:-0.21px">Main</span></div><div class="c" style="left:242px;width:83px"><span style="letter-spacing:-0.43px">HAC001</span></div><div class="c" style="left:325px;width:126px"><span style="letter-spacing:-0.33px">Hack PC - IT Shop</span></div><div class="c" style="left:451px;width:100px"><span style="letter-spacing:-0.20px">Cost Per Copy</span></div><div class="c" style="left:551px;width:92px"></div><div class="c" style="left:643px;width:71px"><span style="letter-spacing:-0.15px">29 Jun 2015</span></div><div class="c" style="left:714px;width:71px"><span style="letter-spacing:-0.15px">29 Jun 2020</span></div><div class="c" style="left:785px;width:67px"><span style="letter-spacing:-0.13px">Sales Department</span></div></div>
<div class="row" style="top:204px"><div class="ind"></div><div class="c" style="left:15px;width:78px"><span style="letter-spacing:-0.26px">CO0000031</span></div><div class="c" style="left:93px;width:78px"><span style="letter-spacing:-0.60px">CPC</span></div><div class="c" style="left:171px;width:71px"><span style="letter-spacing:-0.07px">Durban Area</span></div><div class="c" style="left:242px;width:83px"><span style="letter-spacing:-0.60px">YES001</span></div><div class="c" style="left:325px;width:126px"><span style="letter-spacing:-0.21px">Young Electric</span></div><div class="c" style="left:451px;width:100px"><span style="letter-spacing:-0.20px">Cost Per Copy</span></div><div class="c" style="left:551px;width:92px"></div><div class="c" style="left:643px;width:71px"><span style="letter-spacing:-0.07px">24 Mar 2016</span></div><div class="c" style="left:714px;width:71px"><span style="letter-spacing:-0.07px">24 Mar 2021</span></div><div class="c" style="left:785px;width:67px"><span style="letter-spacing:-0.13px">Sales Department</span></div></div>
<div class="row" style="top:225px"><div class="ind"></div><div class="c" style="left:15px;width:78px"><span style="letter-spacing:-0.26px">CO0000038</span></div><div class="c" style="left:93px;width:78px"><span style="letter-spacing:-0.60px">CPC</span></div><div class="c" style="left:171px;width:71px"><span style="letter-spacing:-0.07px">Durban Area</span></div><div class="c" style="left:242px;width:83px"><span style="letter-spacing:-0.37px">SAM001</span></div><div class="c" style="left:325px;width:126px"><span style="letter-spacing:-0.20px">Samanthas Diner</span></div><div class="c" style="left:451px;width:100px"><span style="letter-spacing:-0.20px">Cost Per Copy</span></div><div class="c" style="left:551px;width:92px"></div><div class="c" style="left:643px;width:71px"><span style="letter-spacing:-0.15px">23 Jun 2016</span></div><div class="c" style="left:714px;width:71px"><span style="letter-spacing:-0.15px">23 Jun 2021</span></div><div class="c" style="left:785px;width:67px"><span style="letter-spacing:-0.13px">Sales Department</span></div></div>
<div class="row" style="top:246px"><div class="ind"></div><div class="c" style="left:15px;width:78px"><span style="letter-spacing:-0.26px">CO0000041</span></div><div class="c" style="left:93px;width:78px"><span style="letter-spacing:-0.60px">CPC</span></div><div class="c" style="left:171px;width:71px"><span style="letter-spacing:-0.21px">Main</span></div><div class="c" style="left:242px;width:83px"><span style="letter-spacing:-0.36px">PAN001</span></div><div class="c" style="left:325px;width:126px"><span style="letter-spacing:-0.29px">Panda Copiers</span></div><div class="c" style="left:451px;width:100px"><span style="letter-spacing:-0.20px">Cost Per Copy</span></div><div class="c" style="left:551px;width:92px"></div><div class="c" style="left:643px;width:71px"><span style="letter-spacing:-0.18px">05 Jul 2016</span></div><div class="c" style="left:714px;width:71px"><span style="letter-spacing:-0.18px">05 Jul 2021</span></div><div class="c" style="left:785px;width:67px"><span style="letter-spacing:-0.13px">Sales Department</span></div></div>
<div class="row" style="top:267px"><div class="ind"></div><div class="c" style="left:15px;width:78px"><span style="letter-spacing:-0.26px">CO0000042</span></div><div class="c" style="left:93px;width:78px"><span style="letter-spacing:-0.60px">CPC</span></div><div class="c" style="left:171px;width:71px"><span style="letter-spacing:-0.21px">Main</span></div><div class="c" style="left:242px;width:83px"><span style="letter-spacing:-0.54px">HOP001</span></div><div class="c" style="left:325px;width:126px"><span style="letter-spacing:-0.23px">Hope Works</span></div><div class="c" style="left:451px;width:100px"><span style="letter-spacing:-0.20px">Cost Per Copy</span></div><div class="c" style="left:551px;width:92px"></div><div class="c" style="left:643px;width:71px"><span style="letter-spacing:-0.22px">07 Sep 2016</span></div><div class="c" style="left:714px;width:71px"><span style="letter-spacing:-0.22px">07 Sep 2021</span></div><div class="c" style="left:785px;width:67px"><span style="letter-spacing:-0.21px">Technical</span></div></div>
<div class="row foc" style="top:288px"><div class="ind"></div><div class="c" style="left:15px;width:78px"><span style="letter-spacing:-0.26px">CO0000043</span></div><div class="c" style="left:93px;width:78px"><span style="letter-spacing:-0.60px">CPC</span></div><div class="c" style="left:171px;width:71px"><span style="letter-spacing:-0.21px">Main</span></div><div class="c" style="left:242px;width:83px"><span style="letter-spacing:-0.54px">HOP001</span></div><div class="c" style="left:325px;width:126px"><span style="letter-spacing:-0.23px">Hope Works</span></div><div class="c" style="left:451px;width:100px"><span style="letter-spacing:-0.20px">Cost Per Copy</span></div><div class="c" style="left:551px;width:92px"></div><div class="c" style="left:643px;width:71px"><span style="letter-spacing:-0.08px">01 Aug 2016</span></div><div class="c" style="left:714px;width:71px"><span style="letter-spacing:-0.22px">07 Sep 2021</span></div><div class="c" style="left:785px;width:67px"><span style="letter-spacing:-0.13px">Sales Department</span></div></div>
<div class="row" style="top:309px"><div class="ind"></div><div class="c" style="left:15px;width:78px"><span style="letter-spacing:-0.26px">CO0000044</span></div><div class="c" style="left:93px;width:78px"><span style="letter-spacing:-0.60px">CPC</span></div><div class="c" style="left:171px;width:71px"><span style="letter-spacing:-0.07px">Durban Area</span></div><div class="c" style="left:242px;width:83px"><span style="letter-spacing:-0.45px">BOT0001</span></div><div class="c" style="left:325px;width:126px"><span style="letter-spacing:-0.17px">Bothas Networking inc</span></div><div class="c" style="left:451px;width:100px"><span style="letter-spacing:-0.20px">Cost Per Copy</span></div><div class="c" style="left:551px;width:92px"></div><div class="c" style="left:643px;width:71px"><span style="letter-spacing:-0.09px">25 Oct 2016</span></div><div class="c" style="left:714px;width:71px"><span style="letter-spacing:-0.09px">25 Oct 2021</span></div><div class="c" style="left:785px;width:67px"><span style="letter-spacing:-0.13px">Sales Department</span></div></div>
<div class="row" style="top:330px"><div class="ind"></div><div class="c" style="left:15px;width:78px"><span style="letter-spacing:-0.26px">CO0000050</span></div><div class="c" style="left:93px;width:78px"><span style="letter-spacing:-0.60px">CPC</span></div><div class="c" style="left:171px;width:71px"><span style="letter-spacing:-0.07px">Durban Area</span></div><div class="c" style="left:242px;width:83px"><span style="letter-spacing:-0.54px">HOP001</span></div><div class="c" style="left:325px;width:126px"><span style="letter-spacing:-0.23px">Hope Works</span></div><div class="c" style="left:451px;width:100px"><span style="letter-spacing:-0.20px">Cost Per Copy</span></div><div class="c" style="left:551px;width:92px"></div><div class="c" style="left:643px;width:71px"><span style="letter-spacing:-0.06px">23 May 2017</span></div><div class="c" style="left:714px;width:71px"><span style="letter-spacing:-0.06px">23 May 2022</span></div><div class="c" style="left:785px;width:67px"><span style="letter-spacing:-0.13px">Sales Department</span></div></div>
<div class="row" style="top:351px"><div class="ind"></div><div class="c" style="left:15px;width:78px"><span style="letter-spacing:-0.26px">CO0000061</span></div><div class="c" style="left:93px;width:78px"><span style="letter-spacing:-0.60px">CPC</span></div><div class="c" style="left:171px;width:71px"><span style="letter-spacing:-0.60px">BPO_RSI</span></div><div class="c" style="left:242px;width:83px"><span style="letter-spacing:-0.08px">TIA001</span></div><div class="c" style="left:325px;width:126px"><span style="letter-spacing:-0.16px">Titan Group</span></div><div class="c" style="left:451px;width:100px"><span style="letter-spacing:-0.20px">Cost Per Copy</span></div><div class="c" style="left:551px;width:92px"></div><div class="c" style="left:643px;width:71px"><span style="letter-spacing:-0.13px">23 Nov 2018</span></div><div class="c" style="left:714px;width:71px"><span style="letter-spacing:-0.13px">23 Nov 2023</span></div><div class="c" style="left:785px;width:67px"><span style="letter-spacing:-0.13px">Sales Department</span></div></div>
<div class="row" style="top:372px"><div class="ind"></div><div class="c" style="left:15px;width:78px"><span style="letter-spacing:-0.26px">CO0000062</span></div><div class="c" style="left:93px;width:78px"><span style="letter-spacing:-0.60px">CPC</span></div><div class="c" style="left:171px;width:71px"><span style="letter-spacing:-0.07px">Durban Area</span></div><div class="c" style="left:242px;width:83px"><span style="letter-spacing:-0.54px">HOP001</span></div><div class="c" style="left:325px;width:126px"><span style="letter-spacing:-0.23px">Hope Works</span></div><div class="c" style="left:451px;width:100px"><span style="letter-spacing:-0.20px">Cost Per Copy</span></div><div class="c" style="left:551px;width:92px"><span style="letter-spacing:-0.12px">20</span></div><div class="c" style="left:643px;width:71px"><span style="letter-spacing:-0.22px">14 Dec 2018</span></div><div class="c" style="left:714px;width:71px"><span style="letter-spacing:-0.22px">14 Dec 2023</span></div><div class="c" style="left:785px;width:67px"><span style="letter-spacing:-0.13px">Sales Department</span></div></div>
<div class="abs" style="left:-2px;top:286px;width:18px;height:25px;border:3px solid #000;background:#f6f6f8"></div><svg class="abs" style="left:6px;top:294px" width="5" height="8" viewBox="0 0 5 8"><path d="M0 0.500v7l4-3.500z" fill="#222"/></svg>
<div class="abs" style="left:0;top:621px;width:852px;height:17px;background:#f5f5f7"></div><div class="abs" style="left:17px;top:626px;width:251px;height:7px;border:1px solid #b8bac2;border-radius:4px;background:linear-gradient(#eeeef2,#dcdde3)"></div><svg class="abs" style="left:6px;top:626px" width="5" height="7" viewBox="0 0 5 8"><path d="M4.500 0.500v7l-4-3.500z" fill="#6d707c"/></svg><svg class="abs" style="left:841px;top:626px" width="5" height="7" viewBox="0 0 5 8"><path d="M0.500 0.500v7l4-3.500z" fill="#6d707c"/></svg>
</div>
<div id="status"><div class="t " style="left:6.9px;top:7.3px;font-size:11px;line-height:13px;letter-spacing:-0.17px;color:#22274a;">Open Windows</div><svg class="abs" style="left:83px;top:11px" width="7" height="4" viewBox="0 0 7 4"><path d="M0 0h7L3.500 4z" fill="#22274a"/></svg><div class="abs" style="left:875px;top:5px;width:2px;height:20px;border-left:1px solid #b9bbc4;border-right:1px solid #eeeef2"></div><div class="abs" style="left:886px;top:4px;width:100px;height:22px;background:#fff;border:1px solid #d0d2d9;border-top-color:#a3a6b0"></div><div class="t " style="left:891.7px;top:8.1px;font-size:11px;line-height:13px;letter-spacing:-0.30px;color:#1c1c28;">14 Dec 2018</div><svg class="abs" style="left:974px;top:7px" width="8" height="15" viewBox="0 0 8 15"><path d="M0.500 3.800l3.500-3 3.500 3zM0.500 10.800l3.500 3 3.500-3z" fill="#cdcfd6"/></svg><svg class="abs" style="left:998px;top:12px" width="13" height="13" viewBox="0 0 13 13"><path d="M1 12L12 1M5 12l7-7M9 12l3-3" stroke="#5d6068" stroke-width="1"/></svg></div>
</div>
</body></html>
